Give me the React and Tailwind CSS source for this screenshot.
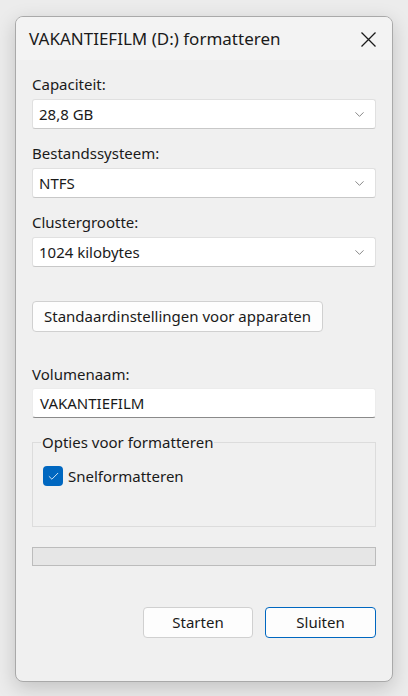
import { ChevronDown, Check } from 'lucide-react';

const font = { fontFamily: '"Noto Sans", "Open Sans", Arial, sans-serif' };

function Keuze({ label, waarde, first }) {
  return (
    <>
      <div className={`${first ? '' : 'mt-[14px]'} h-5 leading-5 text-[15px]`}>{label}</div>
      <div className="mt-[5px] h-[30px] flex items-center justify-between bg-white border border-[#e0e0e0] border-b-[#c8c8c8] rounded-[3px] pl-[6px] pr-[8px]">
        <span className="text-[15px]">{waarde}</span>
        <ChevronDown size={15} strokeWidth={1.2} className="text-[#5f5f5f]" />
      </div>
    </>
  );
}

export default function App() {
  return (
    <div className="w-[408px] h-[696px] bg-[#ececec] pt-4 pl-[15px] text-[#1a1a1a]" style={font}>
      {/* Venster */}
      <div className="w-[378px] h-[666px] bg-[#f0f0f0] border border-[#a9a9a9] rounded-[8px] shadow-[0_6px_20px_rgba(0,0,0,0.18)] overflow-hidden flex flex-col">
        {/* Titelbalk */}
        <div className="h-[43px] bg-[#f3f3f3] flex items-center justify-between pl-[13px] pr-[16px]">
          <span className="text-[17px] mt-[1px]">VAKANTIEFILM (D:) formatteren</span>
          <svg width="15" height="15" viewBox="0 0 15 15" className="mt-[1px]">
            <path d="M0.5 0.5 L14.5 14.5 M14.5 0.5 L0.5 14.5" stroke="#1a1a1a" strokeWidth="1.3" fill="none" />
          </svg>
        </div>

        <div className="px-4 pt-[14px] flex flex-col">
          <Keuze first label="Capaciteit:" waarde="28,8 GB" />
          <Keuze label="Bestandssysteem:" waarde="NTFS" />
          <Keuze label="Clustergrootte:" waarde="1024 kilobytes" />

          <div className="mt-[34px]">
            <button className="h-[31px] px-[11px] bg-[#fdfdfd] border border-[#d0d0d0] rounded-[4px] text-[15px]">
              Standaardinstellingen voor apparaten
            </button>
          </div>

          <div className="mt-[32px] h-5 leading-5 text-[15px]">Volumenaam:</div>
          <div className="mt-[4px] h-[30px] flex items-center bg-white border border-[#ececec] border-b-[#8a8a8a] rounded-[3px] px-[7px] text-[15px]">
            VAKANTIEFILM
          </div>

          {/* Opties */}
          <fieldset className="mt-[14px] h-[95px] border border-[#dcdcdc] px-[10px] m-0">
            <legend className="px-[1px] -ml-[2px] text-[15px] leading-5">Opties voor formatteren</legend>
            <label className="mt-[13px] flex items-center gap-[5px] text-[15px]">
              <span className="w-[20px] h-[20px] rounded-[4px] bg-[#0067c0] flex items-center justify-center">
                <Check size={13} strokeWidth={1.5} className="text-white" />
              </span>
              Snelformatteren
            </label>
          </fieldset>

          {/* Voortgang */}
          <div className="mt-[20px] h-[19px] bg-[#e6e6e6] border border-[#bcbcbc]" />

          <div className="mt-[41px] flex justify-end gap-[12px]">
            <button className="w-[110px] h-[31px] bg-[#fdfdfd] border border-[#d0d0d0] rounded-[4px] text-[15px]">
              Starten
            </button>
            <button className="w-[111px] h-[31px] bg-[#fdfdfd] border border-[#0067c0] rounded-[4px] text-[15px]">
              Sluiten
            </button>
          </div>
        </div>
      </div>
    </div>
  );
}
